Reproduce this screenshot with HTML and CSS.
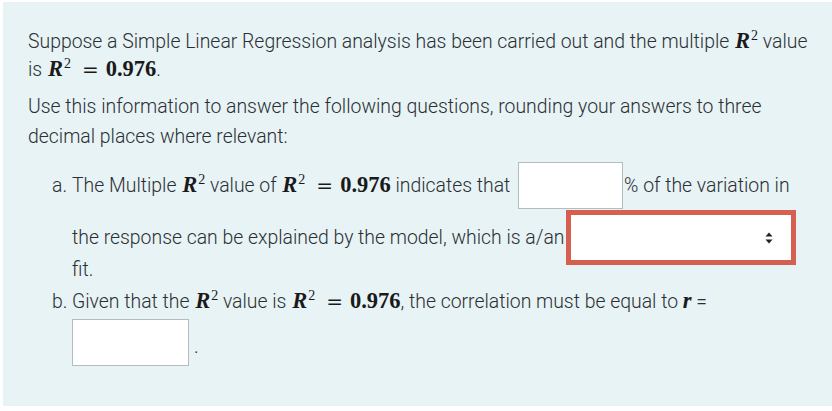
FILE: index.html
```html
<!DOCTYPE html>
<html>
<head>
<meta charset="utf-8">
<link rel="stylesheet" href="styles.css">
</head>
<body>
<div class="panel">
  <p class="para p1">Suppose a Simple Linear Regression analysis has been carried out and the multiple <span class="m"><i class="R">R</i><sup>2</sup></span> value is <span class="m"><i class="R">R</i><sup>2</sup><span class="eq">=</span><b class="num">0.976</b></span>.</p>
  <p class="para p2">Use this information to answer the following questions, rounding your answers to three decimal places where relevant:</p>
  <div class="items">
    <div class="item">
      <span class="marker">a.</span>
      <div class="body">
        <div class="line1">The Multiple <span class="m"><i class="R">R</i><sup>2</sup></span> value of <span class="m"><i class="R">R</i><sup>2</sup><span class="eq">=</span><b class="num">0.976</b></span> indicates that <span class="box boxa"></span>% of the variation in</div>
        <div class="line2">the response can be explained by the model, which is a/an<span class="select"><span class="arrows"><svg width="8" height="12" viewBox="0 0 8 12"><path d="M4 0.5 L7.5 4.5 L0.5 4.5 Z M4 11.5 L7.5 7.5 L0.5 7.5 Z" fill="#222"/></svg></span></span></div>
        <div class="line3">fit.</div>
      </div>
    </div>
    <div class="item">
      <span class="marker">b.</span>
      <div class="body">
        <div class="line4">Given that the <span class="m"><i class="R">R</i><sup>2</sup></span> value is <span class="m"><i class="R">R</i><sup>2</sup><span class="eq">=</span><b class="num">0.976</b></span>, the correlation must be equal to <i class="r">r</i> =</div>
        <div class="line5"><span class="box boxb"></span><span class="dot">.</span></div>
      </div>
    </div>
  </div>
</div>
</body>
</html>
```

FILE: styles.css
```css
html, body {
  margin: 0;
  padding: 0;
  background: #ffffff;
}
body {
  font-family: Roboto, "Noto Sans", sans-serif;
  font-weight: 300;
  font-size: 19.4px;
  color: #2b2f33;
}
.panel {
  margin: 2px 0 0 3px;
  height: 404px;
  box-sizing: border-box;
  background: #e7f3f5;
  padding: 26px 15px 0 25px;
}
.para {
  margin: 0;
}
.p1 {
  line-height: 28px;
}
.p2 {
  line-height: 30px;
  margin-top: 8px;
}
.m {
  font-family: "Liberation Serif", "DejaVu Serif", serif;
  font-size: 22.5px;
  white-space: nowrap;
  font-weight: 400;
  color: #1a1a1a;
  line-height: 1;
}
.R {
  font-weight: 700;
  font-style: italic;
  margin-left: 1px;
}
.m sup {
  font-size: 14px;
  line-height: 0;
  vertical-align: 8px;
  margin-left: 1px;
  font-weight: 400;
}
.eq {
  font-family: "DejaVu Sans", sans-serif;
  font-size: 20px;
  font-weight: 400;
  margin: 0 7px 0 11px;
}
.num {
  font-weight: 700;
}
.r {
  font-family: "Liberation Serif", serif;
  font-weight: 700;
  font-size: 22.5px;
  color: #1a1a1a;
  line-height: 1;
}
.items {
  margin-top: 9px;
}
.item {
  display: flex;
  align-items: baseline;
  padding-left: 24px;
}
.marker {
  width: 20px;
  flex: none;
}
.body {
  flex: 1;
}
.line1 {
  height: 48px;
  display: flex;
  align-items: center;
  white-space: pre;
}
.box {
  display: inline-block;
  background: #fff;
  border: 1px solid #b5bcbf;
  box-sizing: border-box;
  height: 47px;
}
.boxa {
  width: 105px;
  margin: 0 1px 0 3px;
}
.line2 {
  height: 55px;
  margin-top: 1px;
  display: flex;
  align-items: center;
  white-space: pre;
}
.select {
  display: flex;
  align-items: center;
  justify-content: flex-end;
  width: 230px;
  height: 55px;
  box-sizing: border-box;
  border: 5px solid #d6604f;
  background: #fff;
  padding-right: 18px;
  margin-left: 1px;
}
.arrows {
  display: flex;
}
.line3 {
  line-height: 28px;
  margin-top: -9px;
}
.line4 {
  line-height: 28px;
  margin-top: 4px;
}
.line5 {
  display: flex;
  align-items: center;
  margin-top: 3px;
}
.boxb {
  width: 117px;
}
.dot {
  margin-left: 5px;
  line-height: 18px;
  margin-top: 8px;
}
```
